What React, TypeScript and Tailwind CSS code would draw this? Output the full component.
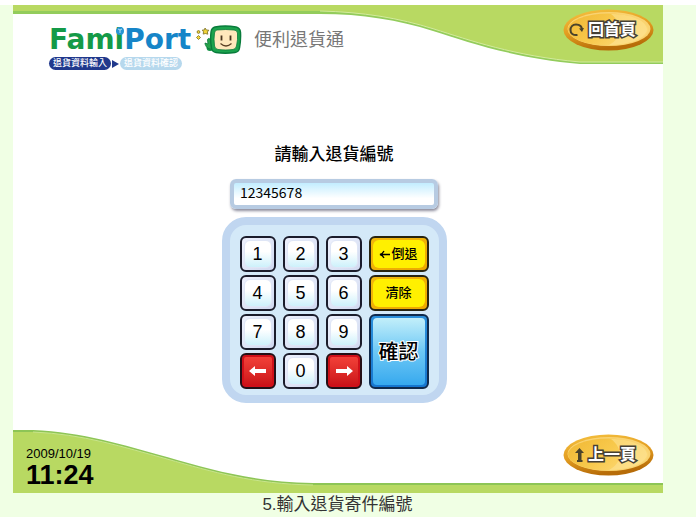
import { useState } from "react";
import type { ReactNode } from "react";

const CJK = "font-['Liberation_Sans','Noto_Sans_CJK_TC',sans-serif]";

function HeaderWave() {
  return (
    <svg className="col-start-1 row-start-1 h-[60px] w-full" viewBox="0 0 650 60" preserveAspectRatio="none" aria-hidden="true">
      <path d="M0 0H650V59H567C500 53 455 37 420 26C385 15 350 9 307 9H0Z" fill="#93cc5c" />
      <path d="M0 0H650V57H567C501 51 456 35 421 24C386 13 350 7 307 6H0Z" fill="#b8d962" />
      <path d="M307 6C350 7 386 13 421 24C456 35 501 51 567 57H650" fill="none" stroke="#d3eb9c" strokeWidth="1" />
    </svg>
  );
}

function FooterWave() {
  return (
    <svg className="col-start-1 row-start-1 h-[64px] w-full self-end" viewBox="0 0 650 64" preserveAspectRatio="none" aria-hidden="true">
      <path d="M0 1H20C70 3 110 16 154 28C200 41 240 53 300 54H650V64H0Z" fill="#8dc556" />
      <path d="M0 3H20C70 5 110 18 154 30C200 43 240 55 300 56H650V64H0Z" fill="#b8d962" />
      <path d="M20 3C70 5 110 18 154 30C200 43 240 55 300 56" fill="none" stroke="#c9e58c" strokeWidth="1" />
    </svg>
  );
}

function Mascot() {
  return (
    <svg className="h-[30px] w-[47px]" viewBox="0 0 47 30" aria-hidden="true">
      <g fill="#f2d437" stroke="#796d20" strokeWidth=".8">
        <path d="M10 3l1.400 2 2.400.2-1.400 1.800.4 2.200-2.400-.7-2.200.6.3-2.300-1.200-1.800 2.200-.1z" />
        <circle cx="3.500" cy="7" r="1.400" />
        <path d="M3.500 10.500l2 2-2 2-2-2z" />
      </g>
      <circle cx="15" cy="22.500" r="3.500" fill="#129044" />
      <path d="M18 24C13 25 10 21 10 18l3 1-.5-4c0-2 2.500-2 3 0l1.500 5z" fill="#26a34a" stroke="#08763a" strokeWidth=".8" />
      <path d="M20 2Q30 0 41 2Q45 3 45.500 7Q46 15 44.500 23Q44 27 40 27.500Q30 29 21 27.500Q17 27 16.500 23Q15 15 16 7Q16.500 3 20 2Z" fill="#1ba34d" stroke="#087b3b" strokeWidth="1.400" />
      <path d="M22 5Q31 4 39 5Q42 5 42.500 8Q43 15 41.500 21Q41 24 38 24.500Q31 25.500 23 24.500Q20 24 19.500 21Q18.500 14 19.500 8Q20 5 22 5Z" fill="#ffe8bc" stroke="#087b3b" strokeWidth=".8" />
      <path d="M26.500 10.500v5M35.500 10.500v5" stroke="#49351f" strokeWidth="1.800" />
      <path d="M25.500 18.500Q31 23.500 36.500 18.500" fill="none" stroke="#5b4025" strokeWidth="1.200" />
    </svg>
  );
}

function OvalButton({ label, children }: { label: string; children: ReactNode }) {
  return (
    <button className="grid h-[42px] w-[91px] shrink-0 items-center">
      <svg className="col-start-1 row-start-1 h-[42px] w-[91px]" viewBox="0 0 91 42" aria-hidden="true">
        <defs>
          <linearGradient id="rim" x1="0" y1="0" x2="0.300" y2="1">
            <stop offset="0" stopColor="#f6c341" />
            <stop offset=".55" stopColor="#e39d21" />
            <stop offset="1" stopColor="#b76c08" />
          </linearGradient>
          <linearGradient id="face" x1="0" y1="0" x2="1" y2="0.500">
            <stop offset="0" stopColor="#f0b733" />
            <stop offset=".55" stopColor="#f8c94c" />
            <stop offset="1" stopColor="#fcd977" />
          </linearGradient>
        </defs>
        <ellipse cx="45.500" cy="21" rx="45" ry="20.500" fill="url(#rim)" />
        <ellipse cx="46" cy="20" rx="41.500" ry="17" fill="#f9d372" />
        <ellipse cx="45" cy="20.500" rx="40" ry="16" fill="url(#face)" />
        <path d="M48 5C67 5 83 11 84 20C84 29 66 36 46 36C60 29 60 14 48 5Z" fill="#fde294" opacity=".6" />
      </svg>
      <span className="col-start-1 row-start-1 flex items-center justify-end gap-1 pr-[18px] text-[16px] leading-5 font-bold text-white">
        {children}
        <span className="[-webkit-text-stroke:3px_#454035] [paint-order:stroke_fill]">{label}</span>
      </span>
    </button>
  );
}

function NumberKey({ digit, onPress }: { digit: string; onPress: (d: string) => void }) {
  return (
    <button
      onClick={() => onPress(digit)}
      className="rounded-md border-2 border-[#1b1c2b] bg-linear-to-br from-[#eef1fd] to-[#d0d9f0] p-[2px]"
    >
      <span className="flex h-full items-center justify-center rounded-md border border-[#dfe6f6] bg-linear-to-b from-white from-40% to-[#cdf1fb] text-[18px] leading-5 text-black">
        {digit}
      </span>
    </button>
  );
}

function YellowKey({ children, onPress }: { children: ReactNode; onPress: () => void }) {
  return (
    <button onClick={onPress} className="rounded-md border-2 border-[#282410] bg-linear-to-br from-[#f2b90c] to-[#eda800] p-[2px]">
      <span className="flex h-full items-center justify-center rounded-md bg-[#fff000] text-[13px] leading-5 font-medium text-black">
        {children}
      </span>
    </button>
  );
}

function ArrowKey({ label, d }: { label: string; d: string }) {
  return (
    <button
      aria-label={label}
      className="flex items-center justify-center rounded-md border-2 border-[#241017] bg-linear-to-b from-[#f5423a] to-[#c90d16] shadow-[inset_0_0_0_2px_#d01019]"
    >
      <svg className="h-[10px] w-[18px]" viewBox="0 0 18 10" fill="white" aria-hidden="true">
        <path d={d} />
      </svg>
    </button>
  );
}

export default function App() {
  const [code, setCode] = useState("12345678");
  const press = (d: string) => setCode(code + d);

  return (
    <div className={`${CJK} bg-white pt-[5px]`}>
      <div className="bg-[#f0ffe4]">
        <div className="mr-[33px] ml-[13px] bg-white">
          <header className="grid">
            <HeaderWave />
            <div className="col-start-1 row-start-1 flex items-start justify-between pt-1 pr-[9px] pl-9">
              <div className="pt-4">
                <div className="flex h-[30px] items-center">
                  <h1 className="w-[146px] font-['DejaVu_Sans',sans-serif] text-[28px] leading-[30px] font-bold whitespace-nowrap">
                    <span className="text-[#149a48]">Fam</span>
                    <span className="relative inline-block text-[#149a48]">
                      i
                      <svg className="absolute top-[2px] left-[1px] h-2 w-2" viewBox="0 0 8 8" aria-hidden="true">
                        <circle cx="4" cy="4" r="4" fill="#2795d3" />
                        <path d="M2 2L4 3L4 6M4 3L6 2" fill="none" stroke="#c5e6f6" strokeWidth=".9" />
                      </svg>
                    </span>
                    <span className="text-[#1685c8]">Port</span>
                  </h1>
                  <Mascot />
                  <h2 className="ml-3 text-[18px] leading-6 whitespace-nowrap text-[#777777]">便利退貨通</h2>
                </div>
                <ol className="mt-[2px] flex items-center text-[9px] leading-[13px] font-medium text-white">
                  <li className="rounded-full bg-[#20388c] px-1">退貨資料輸入</li>
                  <li aria-hidden="true" className="px-[1px]">
                    <svg className="h-2 w-[7px]" viewBox="0 0 7 8">
                      <path d="M0 0L7 4L0 8Z" fill="#20388c" />
                    </svg>
                  </li>
                  <li className="rounded-full bg-[#b6d8ed] px-1">退貨資料確認</li>
                </ol>
              </div>
              <OvalButton label="回首頁">
                <svg className="h-[14px] w-[15px]" viewBox="0 0 15 14" aria-hidden="true">
                  <path d="M13 7C13 3 10 1.500 7 1.500C3.500 1.500 1.500 4 1.500 7C1.500 10.500 4 12.500 8.500 12" fill="none" stroke="#4b432b" strokeWidth="2" />
                  <path d="M10 5.500L15 5L13 9Z" fill="#4b432b" />
                </svg>
              </OvalButton>
            </div>
          </header>

          <main className="flex flex-col items-center pt-[73px] pr-2">
            <label htmlFor="code" className="text-[17px] leading-6 font-medium text-black">
              請輸入退貨編號
            </label>
            <input
              id="code"
              value={code}
              onChange={(e) => setCode(e.target.value)}
              className="mt-3 h-[30px] w-[208px] rounded-md border-4 border-[#b7cbe2] bg-linear-to-b from-[#c2edff] to-white to-70% px-[6px] pb-1 font-['Noto_Sans_CJK_TC',sans-serif] text-[14px] leading-5 text-black shadow-[1px_2px_3px_#8b8b9b] outline-none"
            />
            <div className="mt-2 grid grid-cols-[36px_36px_36px_60px] grid-rows-[36px_36px_36px_36px] gap-x-[7px] gap-y-[3px] rounded-3xl border-8 border-[#c0d6f0] bg-[#d4e9f8] px-[10px] pt-[11px] pb-[6px]">
              <NumberKey digit="1" onPress={press} />
              <NumberKey digit="2" onPress={press} />
              <NumberKey digit="3" onPress={press} />
              <YellowKey onPress={() => setCode(code.slice(0, -1))}>
                <svg className="mr-[1px] h-[9px] w-[11px]" viewBox="0 0 11 9" aria-hidden="true">
                  <path d="M11 4.500H2M5 1C4 3 3 4 1 4.500C3 5 4 6 5 8" fill="none" stroke="black" strokeWidth="1.300" />
                </svg>
                倒退
              </YellowKey>
              <NumberKey digit="4" onPress={press} />
              <NumberKey digit="5" onPress={press} />
              <NumberKey digit="6" onPress={press} />
              <YellowKey onPress={() => setCode("")}>清除</YellowKey>
              <NumberKey digit="7" onPress={press} />
              <NumberKey digit="8" onPress={press} />
              <NumberKey digit="9" onPress={press} />
              <button className="row-span-2 rounded-md border-2 border-[#102a4c] bg-linear-to-b from-[#2b8fdb] to-[#1676cf] p-[2px]">
                <span className="flex h-full items-center justify-center rounded-sm bg-linear-to-b from-[#c2effa] via-[#6cc8f5] to-[#36a9ee] text-[20px] leading-6 font-medium text-black">
                  <span className="[-webkit-text-stroke:2px_#ffffff] [paint-order:stroke_fill]">確認</span>
                </span>
              </button>
              <ArrowKey label="向左" d="M0 5L6 0V3H17V7H6V10Z" />
              <NumberKey digit="0" onPress={press} />
              <ArrowKey label="向右" d="M18 5L12 0V3H1V7H12V10Z" />
            </div>
          </main>

          <footer className="mt-[26px] grid">
            <FooterWave />
            <div className="col-start-1 row-start-1 flex items-start justify-between pr-[9px] pb-1 pl-[13px]">
              <time dateTime="2009-10-19T11:24" className="flex flex-col pt-[17px] text-black">
                <span className="text-[13px] leading-4">2009/10/19</span>
                <span className="text-[27px] leading-[26px] font-bold">11:24</span>
              </time>
              <div className="pt-[5px]">
                <OvalButton label="上一頁">
                  <svg className="h-[15px] w-[9px]" viewBox="0 0 9 15" aria-hidden="true">
                    <path d="M4.500 0L9 5H6.500V12H7.500V14H2V12H3V5H0Z" fill="#4b432b" />
                  </svg>
                </OvalButton>
              </div>
            </div>
          </footer>
        </div>
        <p className="pr-[21px] text-center text-[17px] leading-6 text-[#333333]">5.輸入退貨寄件編號</p>
      </div>
    </div>
  );
}
